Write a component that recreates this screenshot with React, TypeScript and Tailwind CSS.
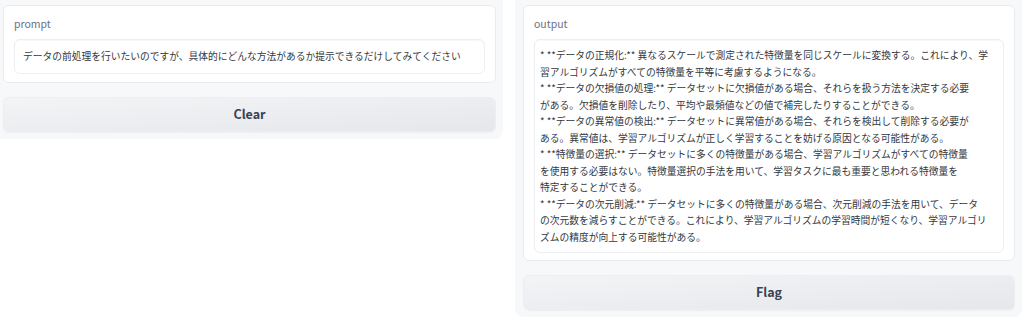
import React from "react";

const font = { fontFamily: '"Noto Sans CJK JP", "Noto Sans", sans-serif' };

const outputLines = [
  "* **データの正規化:** 異なるスケールで測定された特徴量を同じスケールに変換する。これにより、学",
  "習アルゴリズムがすべての特徴量を平等に考慮するようになる。",
  "* **データの欠損値の処理:** データセットに欠損値がある場合、それらを扱う方法を決定する必要",
  "がある。欠損値を削除したり、平均や最頻値などの値で補完したりすることができる。",
  "* **データの異常値の検出:** データセットに異常値がある場合、それらを検出して削除する必要が",
  "ある。異常値は、学習アルゴリズムが正しく学習することを妨げる原因となる可能性がある。",
  "* **特徴量の選択:** データセットに多くの特徴量がある場合、学習アルゴリズムがすべての特徴量",
  "を使用する必要はない。特徴量選択の手法を用いて、学習タスクに最も重要と思われる特徴量を",
  "特定することができる。",
  "* **データの次元削減:** データセットに多くの特徴量がある場合、次元削減の手法を用いて、データ",
  "の次元数を減らすことができる。これにより、学習アルゴリズムの学習時間が短くなり、学習アルゴリ",
  "ズムの精度が向上する可能性がある。",
];

function Button({ label }: { label: string }) {
  return (
    <div className="h-[35px] rounded-[6px] border border-[#eceef1] bg-gradient-to-br from-[#f3f4f6] to-[#e6e7eb] flex items-center justify-center text-[12.5px] font-semibold text-[#374151] shadow-[0_1px_1px_rgba(0,0,0,0.04)]">
      {label}
    </div>
  );
}

export default function App() {
  return (
    <div className="w-[1024px] h-[322px] bg-white flex items-start overflow-hidden" style={font}>
      <div className="w-[503px] bg-[#f7f8fa] pl-[3px] pr-[7px] pt-[5px] pb-[7px] rounded-br-[8px] flex flex-col gap-[14px]">
        <div className="bg-white rounded-[6px] border border-[#e9ebee] px-[10px] pt-[12px] pb-[8px]">
          <div className="text-[10.5px] leading-[12px] text-[#6b7280] mb-[9px]">prompt</div>
          <div className="h-[35px] rounded-[6px] border border-[#eceef1] shadow-[inset_0_1px_1px_rgba(0,0,0,0.03)] px-[8px] flex items-center text-[9.75px] text-[#333840] whitespace-nowrap">
            データの前処理を行いたいのですが、具体的にどんな方法があるか提示できるだけしてみてください
          </div>
        </div>
        <Button label="Clear" />
      </div>
      <div className="w-[507px] ml-[12px] bg-[#f7f8fa] pl-[8px] pr-[7px] pt-[5px] pb-[7px] rounded-b-[8px] flex flex-col gap-[14px]">
        <div className="bg-white rounded-[6px] border border-[#e9ebee] px-[10px] pt-[12px] pb-[7px]">
          <div className="text-[10.5px] leading-[12px] text-[#6b7280] mb-[9px]">output</div>
          <div className="rounded-[6px] border border-[#eceef1] shadow-[inset_0_1px_1px_rgba(0,0,0,0.03)] px-[5px] pt-[7px] pb-[7px] text-[9.75px] leading-[16.5px] text-[#333840]">
            {outputLines.map((l, i) => (
              <div key={i} className="whitespace-nowrap">
                {l}
              </div>
            ))}
          </div>
        </div>
        <Button label="Flag" />
      </div>
    </div>
  );
}
